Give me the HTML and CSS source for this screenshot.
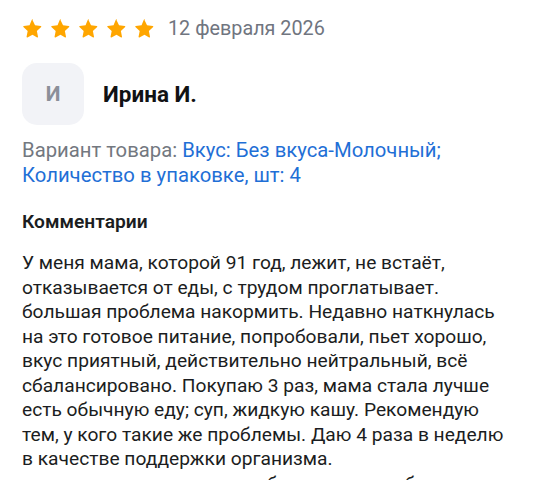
FILE: index.html
```html
<!DOCTYPE html>
<html lang="ru">
<head>
<meta charset="utf-8">
<link rel="stylesheet" href="styles.css">
</head>
<body>
<div class="review">
  <div class="top">
    <div class="stars">
      <svg class="star" viewBox="0 0 24 24"><path d="M12 2.2l2.9 6.1 6.6.8c.6.1.8.8.4 1.2l-4.9 4.6 1.3 6.6c.1.6-.5 1-1 .7L12 19l-5.8 3.2c-.5.3-1.1-.1-1-.7l1.3-6.6-4.9-4.6c-.4-.4-.2-1.1.4-1.2l6.6-.8L11.1 2.2c.3-.5 1.3-.5 1.6 0z"/></svg>
      <svg class="star" viewBox="0 0 24 24"><path d="M12 2.2l2.9 6.1 6.6.8c.6.1.8.8.4 1.2l-4.9 4.6 1.3 6.6c.1.6-.5 1-1 .7L12 19l-5.8 3.2c-.5.3-1.1-.1-1-.7l1.3-6.6-4.9-4.6c-.4-.4-.2-1.1.4-1.2l6.6-.8L11.1 2.2c.3-.5 1.3-.5 1.6 0z"/></svg>
      <svg class="star" viewBox="0 0 24 24"><path d="M12 2.2l2.9 6.1 6.6.8c.6.1.8.8.4 1.2l-4.9 4.6 1.3 6.6c.1.6-.5 1-1 .7L12 19l-5.8 3.2c-.5.3-1.1-.1-1-.7l1.3-6.6-4.9-4.6c-.4-.4-.2-1.1.4-1.2l6.6-.8L11.1 2.2c.3-.5 1.3-.5 1.6 0z"/></svg>
      <svg class="star" viewBox="0 0 24 24"><path d="M12 2.2l2.9 6.1 6.6.8c.6.1.8.8.4 1.2l-4.9 4.6 1.3 6.6c.1.6-.5 1-1 .7L12 19l-5.8 3.2c-.5.3-1.1-.1-1-.7l1.3-6.6-4.9-4.6c-.4-.4-.2-1.1.4-1.2l6.6-.8L11.1 2.2c.3-.5 1.3-.5 1.6 0z"/></svg>
      <svg class="star" viewBox="0 0 24 24"><path d="M12 2.2l2.9 6.1 6.6.8c.6.1.8.8.4 1.2l-4.9 4.6 1.3 6.6c.1.6-.5 1-1 .7L12 19l-5.8 3.2c-.5.3-1.1-.1-1-.7l1.3-6.6-4.9-4.6c-.4-.4-.2-1.1.4-1.2l6.6-.8L11.1 2.2c.3-.5 1.3-.5 1.6 0z"/></svg>
    </div>
    <span class="date">12 февраля 2026</span>
  </div>
  <div class="author">
    <div class="avatar">И</div>
    <div class="name">Ирина И.</div>
  </div>
  <div class="variant">
    <span class="label">Вариант товара:</span> <span class="value">Вкус: Без вкуса-Молочный;<br>Количество в упаковке, шт: 4</span>
  </div>
  <div class="section-title">Комментарии</div>
  <p class="comment">У меня мама, которой 91 год, лежит, не встаёт,<br>отказывается от еды, с трудом проглатывает.<br>большая проблема накормить. Недавно наткнулась<br>на это готовое питание, попробовали, пьет хорошо,<br>вкус приятный, действительно нейтральный, всё<br>сбалансировано. Покупаю 3 раз, мама стала лучше<br>есть обычную еду; суп, жидкую кашу. Рекомендую<br>тем, у кого такие же проблемы. Даю 4 раза в неделю<br>в качестве поддержки организма.<br>мы очень довольны, спасибо за такое удобное питание</p>
</div>
</body>
</html>
```

FILE: styles.css
```css
html, body {
  margin: 0;
  padding: 0;
  background: #ffffff;
}
body {
  font-family: Roboto, "Noto Sans", sans-serif;
  color: #1b1d21;
  width: 550px;
  height: 480px;
  overflow: hidden;
}
.review {
  padding: 16px 22px 0 22px;
}
.top {
  display: flex;
  align-items: center;
  height: 24px;
}
.stars {
  display: flex;
  gap: 7px;
}
.star {
  width: 21px;
  height: 21px;
  fill: #ffa600;
}
.date {
  margin-left: 13px;
  font-size: 19.8px;
  color: #70757f;
}
.author {
  display: flex;
  align-items: center;
  margin-top: 23px;
}
.avatar {
  width: 62px;
  height: 62px;
  border-radius: 15px;
  background: #f2f3f7;
  color: #8b8f99;
  font-size: 21px;
  font-weight: 700;
  display: flex;
  align-items: center;
  justify-content: center;
}
.name {
  margin-left: 19px;
  font-size: 22.5px;
  font-weight: 700;
  color: #111214;
}
.variant {
  margin-top: 13px;
  font-size: 20.3px;
  line-height: 25px;
}
.label {
  color: #737880;
}
.value {
  color: #1f6fd6;
}
.section-title {
  margin-top: 22px;
  font-size: 19.2px;
  font-weight: 600;
  line-height: 24px;
}
.comment {
  margin: 17px 0 0 0;
  font-size: 19.2px;
  line-height: 24.5px;
  white-space: nowrap;
}
```
